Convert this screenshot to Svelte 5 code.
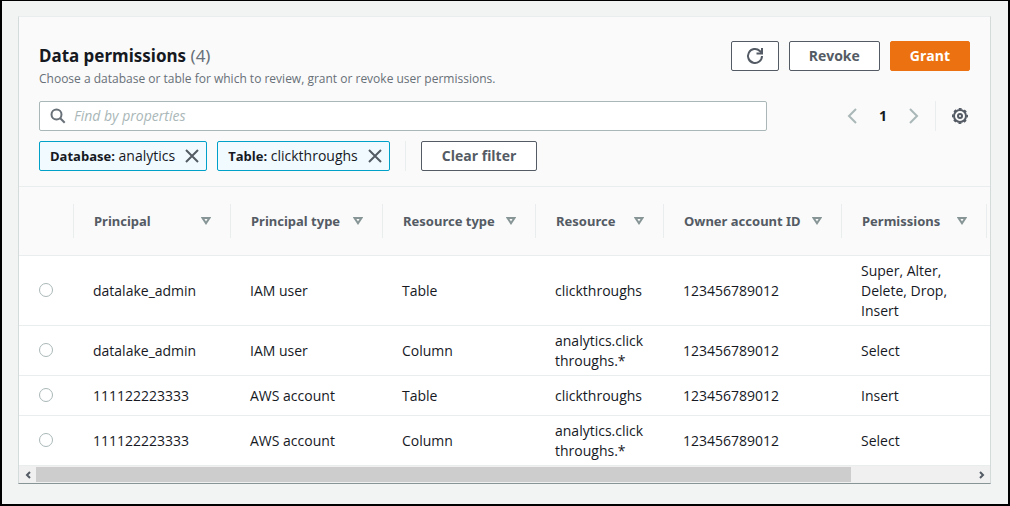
<script>
    const columns = [
        { key: 'principal', label: 'Principal' },
        { key: 'principalType', label: 'Principal type' },
        { key: 'resourceType', label: 'Resource type' },
        { key: 'resource', label: 'Resource' },
        { key: 'owner', label: 'Owner account ID' },
        { key: 'permissions', label: 'Permissions' }
    ];

    const rows = [
        { principal: 'datalake_admin', principalType: 'IAM user', resourceType: 'Table', resource: 'clickthroughs', owner: '123456789012', permissions: 'Super, Alter, Delete, Drop, Insert' },
        { principal: 'datalake_admin', principalType: 'IAM user', resourceType: 'Column', resource: 'analytics.clickthroughs.*', owner: '123456789012', permissions: 'Select' },
        { principal: '111122223333', principalType: 'AWS account', resourceType: 'Table', resource: 'clickthroughs', owner: '123456789012', permissions: 'Insert' },
        { principal: '111122223333', principalType: 'AWS account', resourceType: 'Column', resource: 'analytics.clickthroughs.*', owner: '123456789012', permissions: 'Select' }
    ];

    let filters = $state([
        { name: 'Database', value: 'analytics' },
        { name: 'Table', value: 'clickthroughs' }
    ]);
    let query = $state('');
    let selected = $state(null);
</script>

<main class="page">
    <section class="panel">
        <header class="panel-header">
            <div class="title-row">
                <div>
                    <h2>Data permissions <span class="count">({rows.length})</span></h2>
                    <p class="description">Choose a database or table for which to review, grant or revoke user permissions.</p>
                </div>
                <div class="actions">
                    <button class="btn icon-btn" aria-label="Refresh">
                        <svg width="18" height="18" viewBox="0 0 18 18" fill="none" stroke="currentColor" stroke-width="2">
                            <path d="M16 9a7 7 0 1 1-2.2-5.1L16 6" />
                            <path d="M16 1v5.5h-5.5" />
                        </svg>
                    </button>
                    <button class="btn">Revoke</button>
                    <button class="btn primary">Grant</button>
                </div>
            </div>

            <div class="search-row">
                <label class="search">
                    <svg width="16" height="16" viewBox="0 0 16 16" fill="none" stroke="currentColor" stroke-width="2">
                        <circle cx="6.5" cy="6.5" r="5" />
                        <path d="M10 10l4.7 4.7" />
                    </svg>
                    <input type="text" placeholder="Find by properties" aria-label="Find by properties" bind:value={query} />
                </label>
                <nav class="pagination" aria-label="Pagination">
                    <button class="plain arrow" aria-label="Previous page">
                        <svg width="10" height="16" viewBox="0 0 10 16" fill="none" stroke="currentColor" stroke-width="2"><path d="M9 1L2 8l7 7" /></svg>
                    </button>
                    <button class="plain current">1</button>
                    <button class="plain arrow" aria-label="Next page">
                        <svg width="10" height="16" viewBox="0 0 10 16" fill="none" stroke="currentColor" stroke-width="2"><path d="M1 1l7 7-7 7" /></svg>
                    </button>
                    <span class="divider"></span>
                    <button class="plain" aria-label="Preferences">
                        <svg width="16" height="16" viewBox="0 0 16 16" fill="none" stroke="currentColor">
                            <circle cx="8" cy="8" r="6" stroke-width="2" />
                            <circle cx="8" cy="8" r="7.2" stroke-width="1.6" stroke-dasharray="2.9 2.755" stroke-dashoffset="1.45" />
                            <circle cx="8" cy="8" r="2" stroke-width="2" />
                        </svg>
                    </button>
                </nav>
            </div>

            <div class="filters">
                {#each filters as filter (filter.name)}
                    <div class="token">
                        <span><b>{filter.name}:</b> {filter.value}</span>
                        <button class="plain" aria-label="Remove {filter.name}" onclick={() => (filters = filters.filter((f) => f !== filter))}>
                            <svg width="14" height="14" viewBox="0 0 14 14" fill="none" stroke="currentColor" stroke-width="2"><path d="M1 1l12 12M13 1L1 13" /></svg>
                        </button>
                    </div>
                {/each}
                <span class="divider"></span>
                <button class="btn" onclick={() => (filters = [])}>Clear filter</button>
            </div>
        </header>

        <div class="table-wrap">
            <table>
                <colgroup>
                    <col class="c-select" />
                    {#each columns as col}
                        <col class="c-{col.key}" />
                    {/each}
                    <col />
                </colgroup>
                <thead>
                    <tr>
                        <th><div class="head"></div></th>
                        {#each columns as col}
                            <th scope="col">
                                <div class="head">
                                    {col.label}
                                    <svg width="10" height="8" viewBox="0 0 10 8" fill="none" stroke="currentColor" stroke-width="2"><path d="M1.6 1h6.8L5 6.2z" /></svg>
                                </div>
                            </th>
                        {/each}
                        <th></th>
                    </tr>
                </thead>
                <tbody>
                    {#each rows as row, i}
                        <tr>
                            <td class="select"><input type="radio" name="permission" value={i} aria-label="Select row {i + 1}" bind:group={selected} /></td>
                            {#each columns as col}
                                <td>{row[col.key]}</td>
                            {/each}
                            <td></td>
                        </tr>
                    {/each}
                </tbody>
            </table>
        </div>

        <div class="scrollbar">
            <button class="plain" aria-label="Scroll left">
                <svg width="6" height="8" viewBox="0 0 6 8" fill="none" stroke="currentColor" stroke-width="2"><path d="M5 1L2 4l3 3" /></svg>
            </button>
            <div class="track"><div class="thumb"></div></div>
            <button class="plain" aria-label="Scroll right">
                <svg width="6" height="8" viewBox="0 0 6 8" fill="none" stroke="currentColor" stroke-width="2"><path d="M1 1l3 3-3 3" /></svg>
            </button>
        </div>
    </section>
</main>

<style>
    :global(body) {
        background: #f2f3f3;
    }

    .page {
        box-sizing: border-box;
        min-height: 100vh;
        padding: 15px 17px 20px 16px;
        border: 2px solid #000;
        border-top-width: 1px;
        background: #f2f3f3;
        font-family: "Open Sans", "Noto Sans", sans-serif;
        font-size: 14px;
        line-height: 20px;
        color: #16191f;
    }

    .panel {
        border: 1px solid #d5dbdb;
        border-top-color: #eaeded;
        border-bottom-color: #879596;
        background: #fff;
    }

    .panel-header {
        padding: 24px 20px 15px;
        background: #fafafa;
        border-bottom: 1px solid #eaeded;
    }

    .title-row {
        display: flex;
        justify-content: space-between;
        margin-bottom: 14px;
    }

    h2 {
        margin: 0;
        font-family: "Noto Sans", sans-serif;
        font-size: 17px;
        line-height: 30px;
        font-weight: 700;
    }

    .count {
        font-weight: 400;
        color: #687078;
    }

    .description {
        margin: 0;
        font-size: 12px;
        line-height: 16px;
        color: #687078;
    }

    .actions {
        display: flex;
        align-items: flex-start;
        gap: 10px;
    }

    button {
        font: inherit;
        cursor: pointer;
    }

    svg {
        display: block;
        flex: none;
    }

    .btn {
        box-sizing: border-box;
        height: 30px;
        padding: 0 20px;
        border: 1px solid #545b64;
        border-radius: 2px;
        background: #fff;
        color: #545b64;
        font-weight: 700;
    }

    .actions .btn {
        padding: 0 19px;
    }

    .actions .icon-btn {
        padding: 0 14px;
    }

    .btn.primary {
        border-color: #ec7211;
        background: #ec7211;
        color: #fff;
    }

    .plain {
        display: flex;
        align-items: center;
        padding: 0;
        border: 0;
        background: none;
        color: #545b64;
    }

    .search-row {
        display: flex;
        margin-bottom: 10px;
    }

    .search {
        box-sizing: border-box;
        flex: 1;
        display: flex;
        align-items: center;
        gap: 8px;
        height: 30px;
        padding: 0 10px;
        border: 1px solid #aab7b8;
        border-radius: 2px;
        background: #fff;
        color: #687078;
    }

    .search input {
        flex: 1;
        padding: 0;
        border: 0;
        outline: 0;
        background: none;
        font: inherit;
        color: #16191f;
    }

    .search input::placeholder {
        color: #aab7b8;
        font-style: italic;
        opacity: 1;
    }

    .pagination {
        flex: 0 0 203px;
        display: flex;
        align-items: stretch;
        justify-content: flex-end;
        gap: 16px;
        box-sizing: border-box;
        padding-right: 2px;
    }

    .arrow {
        color: #aab7b8;
    }

    .current {
        padding: 0 6px;
        font-weight: 700;
        color: #16191f;
    }

    .divider {
        width: 1px;
        background: #eaeded;
    }

    .filters {
        display: flex;
        gap: 10px;
    }

    .filters .divider {
        margin: 0 5px;
    }

    .token {
        box-sizing: border-box;
        display: flex;
        align-items: center;
        gap: 10px;
        height: 30px;
        padding: 0 7px 0 10px;
        border: 1px solid #00a1c9;
        border-radius: 2px;
        background: #f1faff;
    }

    .token b {
        font-size: 13px;
    }

    .table-wrap {
        overflow: hidden;
    }

    table {
        width: 115%;
        table-layout: fixed;
        border-collapse: separate;
        border-spacing: 0;
    }

    .c-select { width: 55px; }
    .c-principal { width: 157px; }
    .c-principalType { width: 152px; }
    .c-resourceType { width: 153px; }
    .c-resource { width: 128px; }
    .c-owner { width: 178px; }
    .c-permissions { width: 145px; }

    th {
        padding: 17px 0;
        background: #fafafa;
        border-bottom: 1px solid #eaeded;
        text-align: left;
        font-family: "Noto Sans", sans-serif;
        font-size: 13px;
        color: #545b64;
    }

    .head {
        box-sizing: border-box;
        display: flex;
        align-items: center;
        justify-content: space-between;
        height: 34px;
        padding: 0 19px 0 20px;
        border-right: 1px solid #eaeded;
        white-space: nowrap;
    }

    .head svg {
        color: #879596;
    }

    td {
        box-sizing: border-box;
        height: 40px;
        padding: 5px 19px 4px;
        border-bottom: 1px solid #eaeded;
        vertical-align: middle;
        overflow-wrap: break-word;
    }

    .select {
        padding: 0 0 2px 20px;
    }

    .select input {
        display: block;
        appearance: none;
        width: 14px;
        height: 14px;
        margin: 0;
        border: 1px solid #aab7b8;
        border-radius: 50%;
        background: #fff;
    }

    .select input:checked {
        border: 4px solid #00a1c9;
    }

    .scrollbar {
        display: flex;
        height: 17px;
        background: #f0f0f0;
    }

    .scrollbar .plain {
        width: 17px;
        justify-content: center;
    }

    .track {
        flex: 1;
    }

    .thumb {
        width: 87%;
        height: 15px;
        margin-top: 1px;
        background: #cdcdcd;
    }
</style>
